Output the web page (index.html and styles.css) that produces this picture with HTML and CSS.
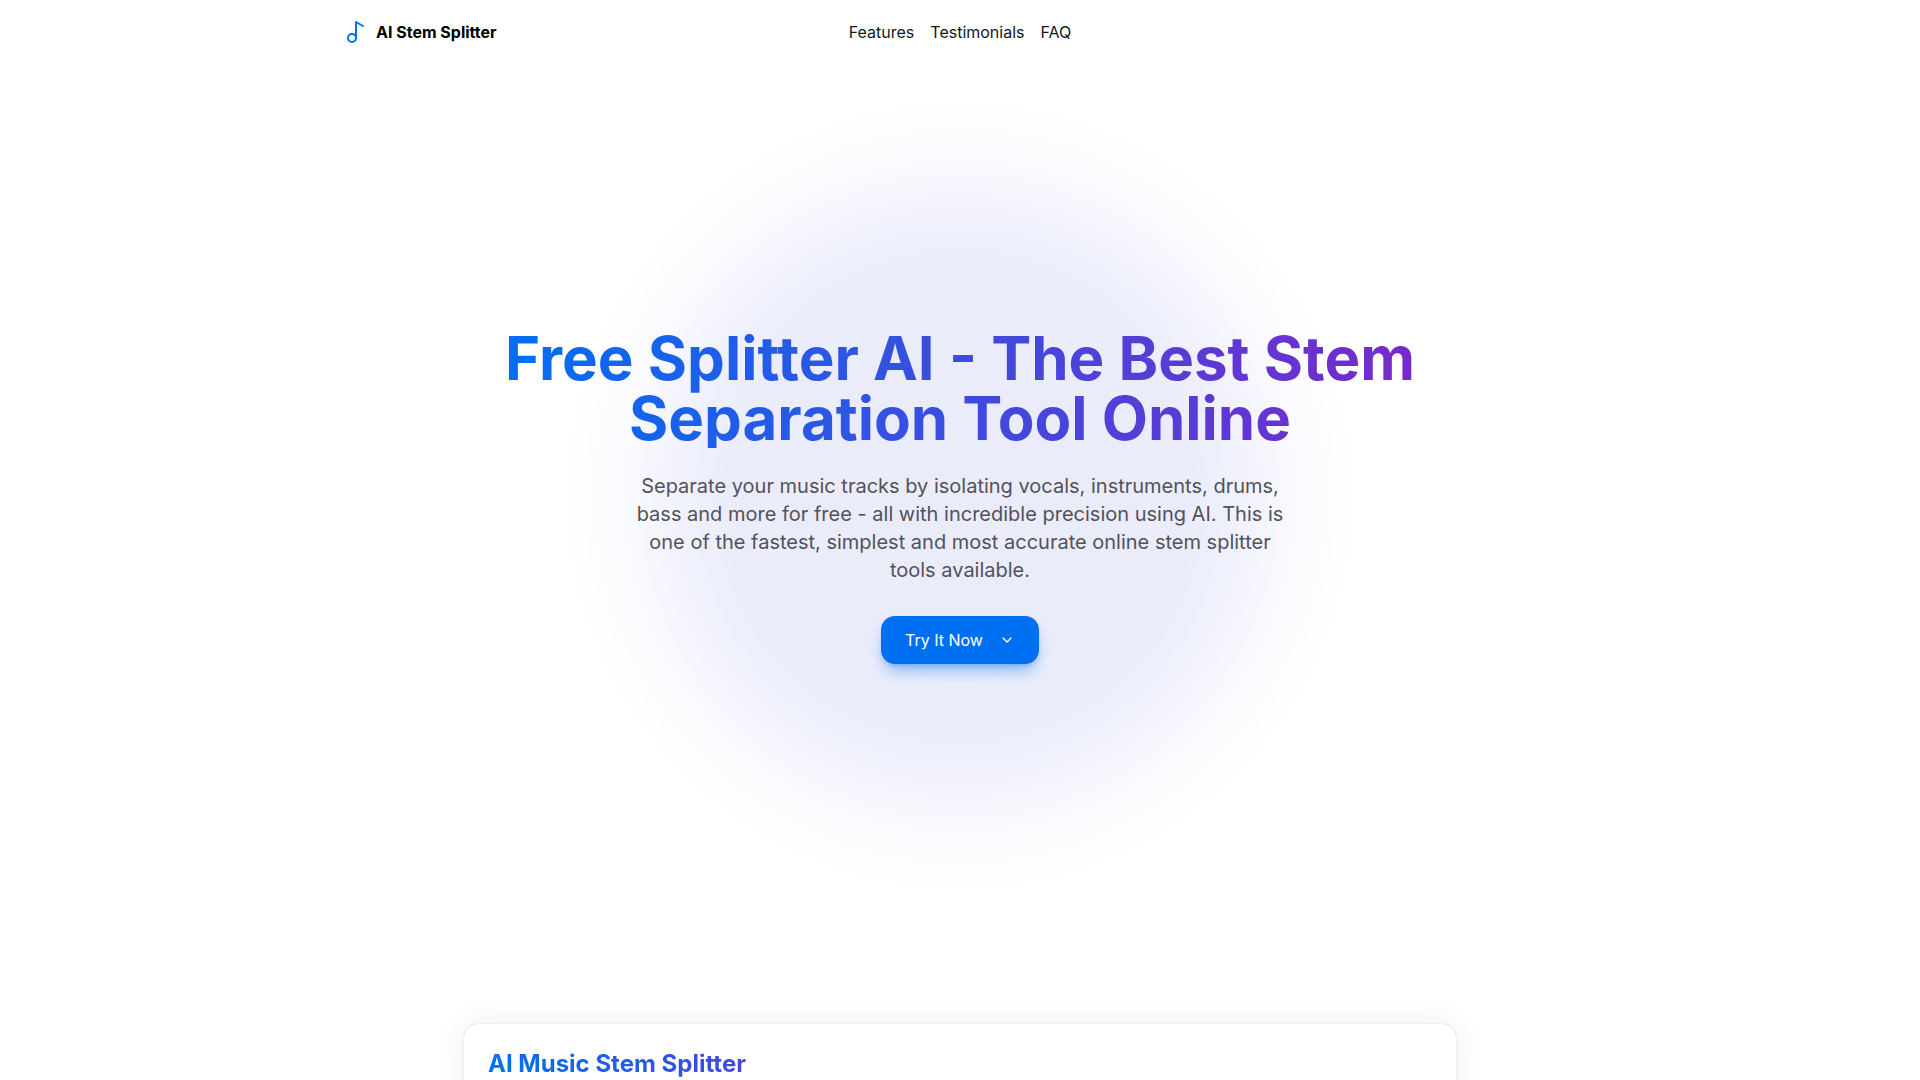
FILE: index.html
```html
<!DOCTYPE html>
<html lang="en">
<head>
  <meta charset="UTF-8">
  <meta name="viewport" content="width=device-width, initial-scale=1.0">
  <title>AI Stem Splitter</title>
  <link rel="stylesheet" href="styles.css">
</head>
<body>
  <header class="navbar">
    <div class="brand">
      <svg class="logo" viewBox="0 0 24 24" width="24" height="24" aria-hidden="true">
        <circle cx="8" cy="18" r="4"/>
        <path d="M12 18V2l7 4"/>
      </svg>
      <span>AI Stem Splitter</span>
    </div>
    <nav class="links">
      <a href="#features">Features</a>
      <a href="#testimonials">Testimonials</a>
      <a href="#faq">FAQ</a>
    </nav>
    <div class="navbar-end"></div>
  </header>

  <main>
    <section class="hero">
      <div class="glow"></div>
      <h1 class="title">Free Splitter AI - The Best Stem Separation Tool Online</h1>
      <p class="tagline">Separate your music tracks by isolating vocals, instruments, drums, bass and more for free - all with incredible precision using AI. This is one of the fastest, simplest and most accurate online stem splitter tools available.</p>
      <button class="cta" type="button">
        Try It Now
        <svg class="chevron" viewBox="0 0 24 24" width="16" height="16" aria-hidden="true">
          <path d="m6 9 6 6 6-6"/>
        </svg>
      </button>
    </section>

    <section class="card" id="splitter">
      <h2 class="card-title">AI Music Stem Splitter</h2>
    </section>
  </main>
</body>
</html>
```
FILE: styles.css
```css
* {
  box-sizing: border-box;
}
html,body {
  margin: 0;
  padding: 0;
  font-family: Inter, sans-serif;
  font-size: 16px;
  line-height: 24px;
  color: #11181c;
  background: #fff;
}
h1,h2,p {
  margin: 0;
}
svg {
  fill: none;
  stroke: currentColor;
  stroke-width: 2;
  stroke-linecap: round;
  stroke-linejoin: round;
}

.navbar {
  display: flex;
  align-items: center;
  gap: 16px;
  max-width: 1280px;
  height: 64px;
  margin: 0 auto;
  padding: 0 24px;
}
.brand {
  display: flex;
  flex: 1 0 0;
  align-items: center;
  gap: 8px;
  color: #000;
  font-weight: 700;
}
.logo {
  color: #0070f3;
}
.links {
  display: flex;
  gap: 16px;
}
.links a {
  color: inherit;
  text-decoration: none;
}
.navbar-end {
  flex: 1 0 0;
}

.hero {
  position: relative;
  isolation: isolate;
  display: flex;
  flex-direction: column;
  align-items: center;
  justify-content: center;
  min-height: 80vh;
  padding: 0 24px;
  text-align: center;
}
/* soft colour behind the headline */
.glow {
  position: absolute;
  top: 50%;
  left: 50%;
  z-index: -1;
  width: 620px;
  height: 620px;
  border-radius: 50%;
  background: #3c4cd8;
  filter: blur(50px);
  opacity: 0.1;
  transform: translate(-50%, -50%);
}
.title,
.card-title {
  background: linear-gradient(90deg, #0070f3, #7928ca);
  -webkit-background-clip: text;
  background-clip: text;
  color: transparent;
  font-weight: 700;
}
.title {
  max-width: 944px;
  margin-bottom: 24px;
  font-size: 60px;
  line-height: 60px;
}
.tagline {
  max-width: 672px;
  margin-bottom: 32px;
  color: #52525b;
  font-size: 20px;
  line-height: 28px;
}
.cta {
  display: flex;
  align-items: center;
  gap: 16px;
  height: 48px;
  padding: 0 24px;
  border: 0;
  border-radius: 14px;
  background: #0070f3;
  color: #fff;
  font: inherit;
  box-shadow: 0 10px 15px -3px rgba(0, 112, 243, 0.4), 0 4px 6px -4px rgba(0, 112, 243, 0.4);
  cursor: pointer;
}

.card {
  max-width: 992px;
  min-height: 320px;
  margin: 96px auto 0;
  padding: 24px;
  border-radius: 14px;
  background: #fff;
  box-shadow: 0 0 30px rgba(0, 0, 0, 0.08), 0 0 1px rgba(0, 0, 0, 0.3);
}
.card-title {
  max-width: 472px;
  font-size: 24px;
  line-height: 32px;
}
```
